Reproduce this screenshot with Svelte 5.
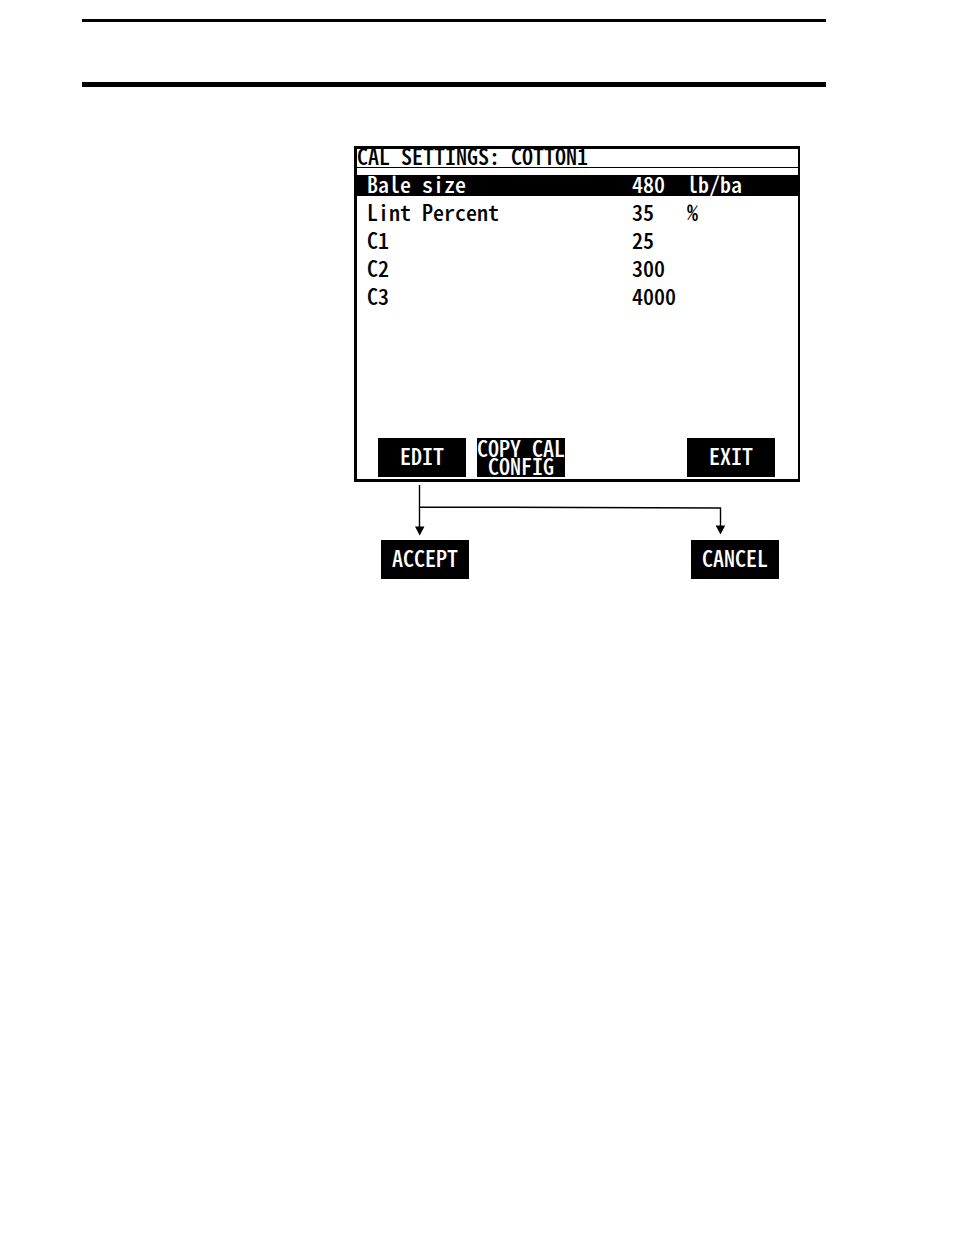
<script lang="ts">
	type Setting = { name: string; value: number; unit: string };

	const settings: Setting[] = [
		{ name: 'Bale size', value: 480, unit: 'lb/ba' },
		{ name: 'Lint Percent', value: 35, unit: '%' },
		{ name: 'C1', value: 25, unit: '' },
		{ name: 'C2', value: 300, unit: '' },
		{ name: 'C3', value: 4000, unit: '' }
	];

	let selected = $state(0);
</script>

<div class="page">
	<header class="rules"></header>

	<main class="figure">
		<section class="screen">
			<h1 class="title">CAL SETTINGS: COTTON1</h1>

			<table class="settings">
				<colgroup>
					<col />
					<col class="value-col" />
					<col class="unit-col" />
				</colgroup>
				<tbody>
					{#each settings as setting, i}
						<tr class:selected={i === selected} onclick={() => (selected = i)}>
							<th scope="row">{setting.name}</th>
							<td>{setting.value}</td>
							<td>{setting.unit}</td>
						</tr>
					{/each}
				</tbody>
			</table>

			<div class="softkeys">
				<button class="key">EDIT</button>
				<button class="key">COPY CAL CONFIG</button>
				<button class="key last">EXIT</button>
			</div>
		</section>

		<!-- EDIT leads to ACCEPT or CANCEL -->
		<svg class="arrows" viewBox="0 0 446 58" aria-hidden="true">
			<path d="M65.5 3V46M65.5 25L366.5 26V45" fill="none" stroke="#000" stroke-width="1.4" />
			<path d="M61 44.500H70.500L65.700 53.500ZM361.700 43.500H371.200L366.500 52.500Z" />
		</svg>

		<div class="branches">
			<button class="key">ACCEPT</button>
			<button class="key last">CANCEL</button>
		</div>
	</main>
</div>

<style>
	:global(body) {
		margin: 0;
		background: #fff;
	}

	.page {
		padding: 19px 128px 0 82px;
		color: #000;
		font-family: 'Noto Sans CJK SC', 'DejaVu Sans Mono', monospace;
		font-size: 22px;
		font-weight: 500;
		font-feature-settings: 'hwid';
		line-height: 18px;
	}

	.rules {
		height: 60px;
		border-top: 3px solid #000;
		border-bottom: 5px solid #000;
	}

	.figure {
		margin: 59px 26px 0 272px;
	}

	.screen {
		border: 3px solid #000;
		border-right-width: 2px;
		padding-bottom: 2px;
	}

	.title {
		margin: 0;
		padding-bottom: 6px;
		border-bottom: 1px solid #000;
		font: inherit;
		line-height: 12px;
		white-space: nowrap;
	}

	.settings {
		width: 100%;
		margin-bottom: 123px;
		table-layout: fixed;
		border-spacing: 0 7px;
		line-height: 17px;
	}

	.value-col {
		width: 55px;
	}

	.unit-col {
		width: 111px;
	}

	.settings th,
	.settings td {
		padding: 0 0 4px;
		font-weight: inherit;
		text-align: left;
		white-space: nowrap;
	}

	.settings th {
		padding-left: 10px;
	}

	.selected {
		background: #000;
		color: #fff;
	}

	.softkeys {
		display: flex;
		gap: 11px;
		padding: 0 23px 0 21px;
	}

	.branches {
		display: flex;
		padding: 0 21px 0 27px;
	}

	.key {
		width: 88px;
		height: 39px;
		padding: 0 0 5px;
		border: 0;
		background: #000;
		color: #fff;
		font: inherit;
		font-feature-settings: inherit;
		cursor: pointer;
	}

	.last {
		margin-left: auto;
	}

	.arrows {
		display: block;
		width: 100%;
	}
</style>
